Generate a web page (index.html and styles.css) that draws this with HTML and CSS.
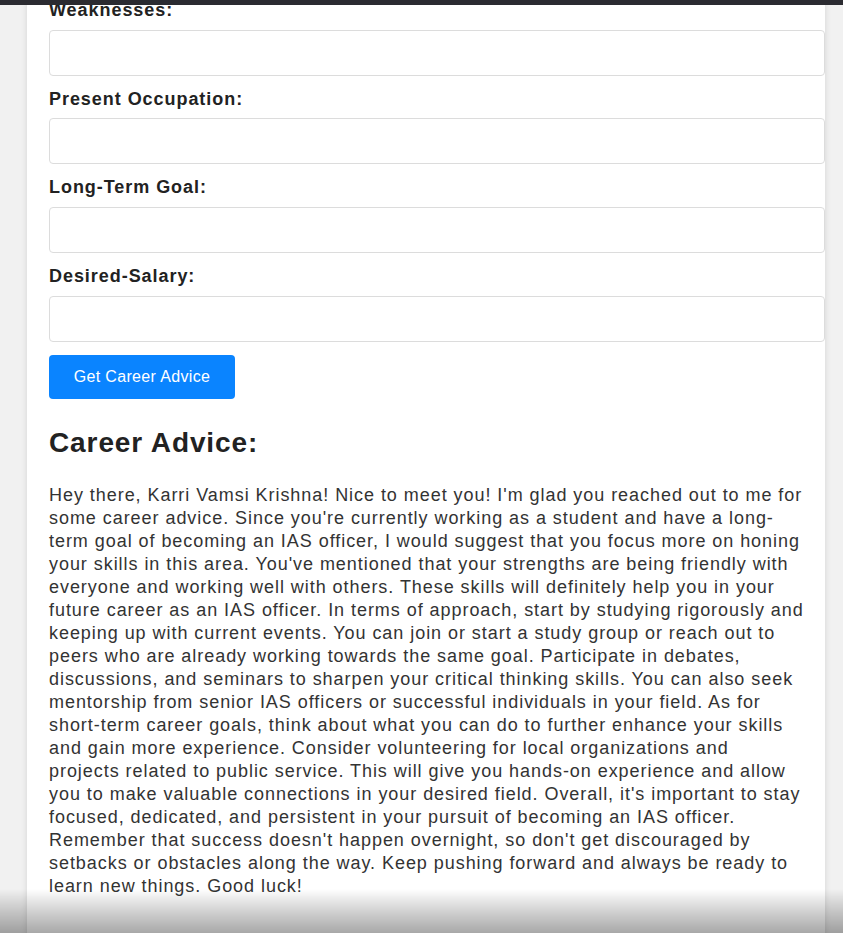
FILE: index.html
```html
<!DOCTYPE html>
<html>
<head>
<meta charset="utf-8">
<link rel="stylesheet" href="styles.css">
</head>
<body>
<div class="topbar"></div>
<main class="card">
  <form class="form">
    <label class="label">Weaknesses:</label>
    <input class="field" type="text">
    <label class="label">Present Occupation:</label>
    <input class="field" type="text">
    <label class="label">Long-Term Goal:</label>
    <input class="field" type="text">
    <label class="label">Desired-Salary:</label>
    <input class="field" type="text">
    <button class="btn" type="button">Get Career Advice</button>
  </form>
  <h2 class="heading">Career Advice:</h2>
  <p class="advice">Hey there, Karri Vamsi Krishna! Nice to meet you! I'm glad you reached out to me for some career advice. Since you're currently working as a student and have a long-term goal of becoming an IAS officer, I would suggest that you focus more on honing your skills in this area. You've mentioned that your strengths are being friendly with everyone and working well with others. These skills will definitely help you in your future career as an IAS officer. In terms of approach, start by studying rigorously and keeping up with current events. You can join or start a study group or reach out to peers who are already working towards the same goal. Participate in debates, discussions, and seminars to sharpen your critical thinking skills. You can also seek mentorship from senior IAS officers or successful individuals in your field. As for short-term career goals, think about what you can do to further enhance your skills and gain more experience. Consider volunteering for local organizations and projects related to public service. This will give you hands-on experience and allow you to make valuable connections in your desired field. Overall, it's important to stay focused, dedicated, and persistent in your pursuit of becoming an IAS officer. Remember that success doesn't happen overnight, so don't get discouraged by setbacks or obstacles along the way. Keep pushing forward and always be ready to learn new things. Good luck!</p>
</main>
<div class="shade"></div>
</body>
</html>
```

FILE: styles.css
```css
html, body {
  margin: 0;
  padding: 0;
}
body {
  background: #f1f1f1;
  font-family: "Liberation Sans", Arial, sans-serif;
  color: #222;
  overflow: hidden;
  height: 933px;
}
.topbar {
  position: fixed;
  top: 0;
  left: 0;
  right: 0;
  height: 5px;
  background: #2b2b31;
  z-index: 5;
}
.card {
  margin: 0 18px 0 27px;
  background: #fff;
  padding: 0 20px 60px 22px;
  box-shadow: 0 0 6px rgba(0, 0, 0, 0.12);
  min-height: 940px;
}
.form {
  display: flex;
  flex-direction: column;
}
.label {
  font-size: 18px;
  font-weight: bold;
  line-height: 21px;
  letter-spacing: 0.95px;
  margin: 0 0 8.7px;
  color: #222;
}
.field {
  width: calc(100% + 20px);
  box-sizing: border-box;
  height: 46px;
  border: 1px solid #dcdcdc;
  border-radius: 4px;
  margin: 0 0 13px;
  padding: 0 10px;
  background: #fff;
}
.btn {
  align-self: flex-start;
  width: 186px;
  height: 44px;
  background: #0a84ff;
  color: #fff;
  border: none;
  border-radius: 4px;
  font-family: "Liberation Sans", Arial, sans-serif;
  font-size: 16px;
  letter-spacing: 0.35px;
  margin: 0;
}
.heading {
  font-size: 28px;
  line-height: 32px;
  font-weight: bold;
  letter-spacing: 0.9px;
  margin: 28px 0 25px;
  color: #222;
}
.advice {
  font-size: 18px;
  line-height: 23px;
  letter-spacing: 0.95px;
  margin: 0;
  color: #333;
}
.shade {
  position: fixed;
  left: 0;
  right: 0;
  bottom: 0;
  height: 44px;
  background: linear-gradient(to bottom, rgba(0,0,0,0) 0%, rgba(0,0,0,0.16) 45%, rgba(0,0,0,0.34) 100%);
  z-index: 4;
}
```
